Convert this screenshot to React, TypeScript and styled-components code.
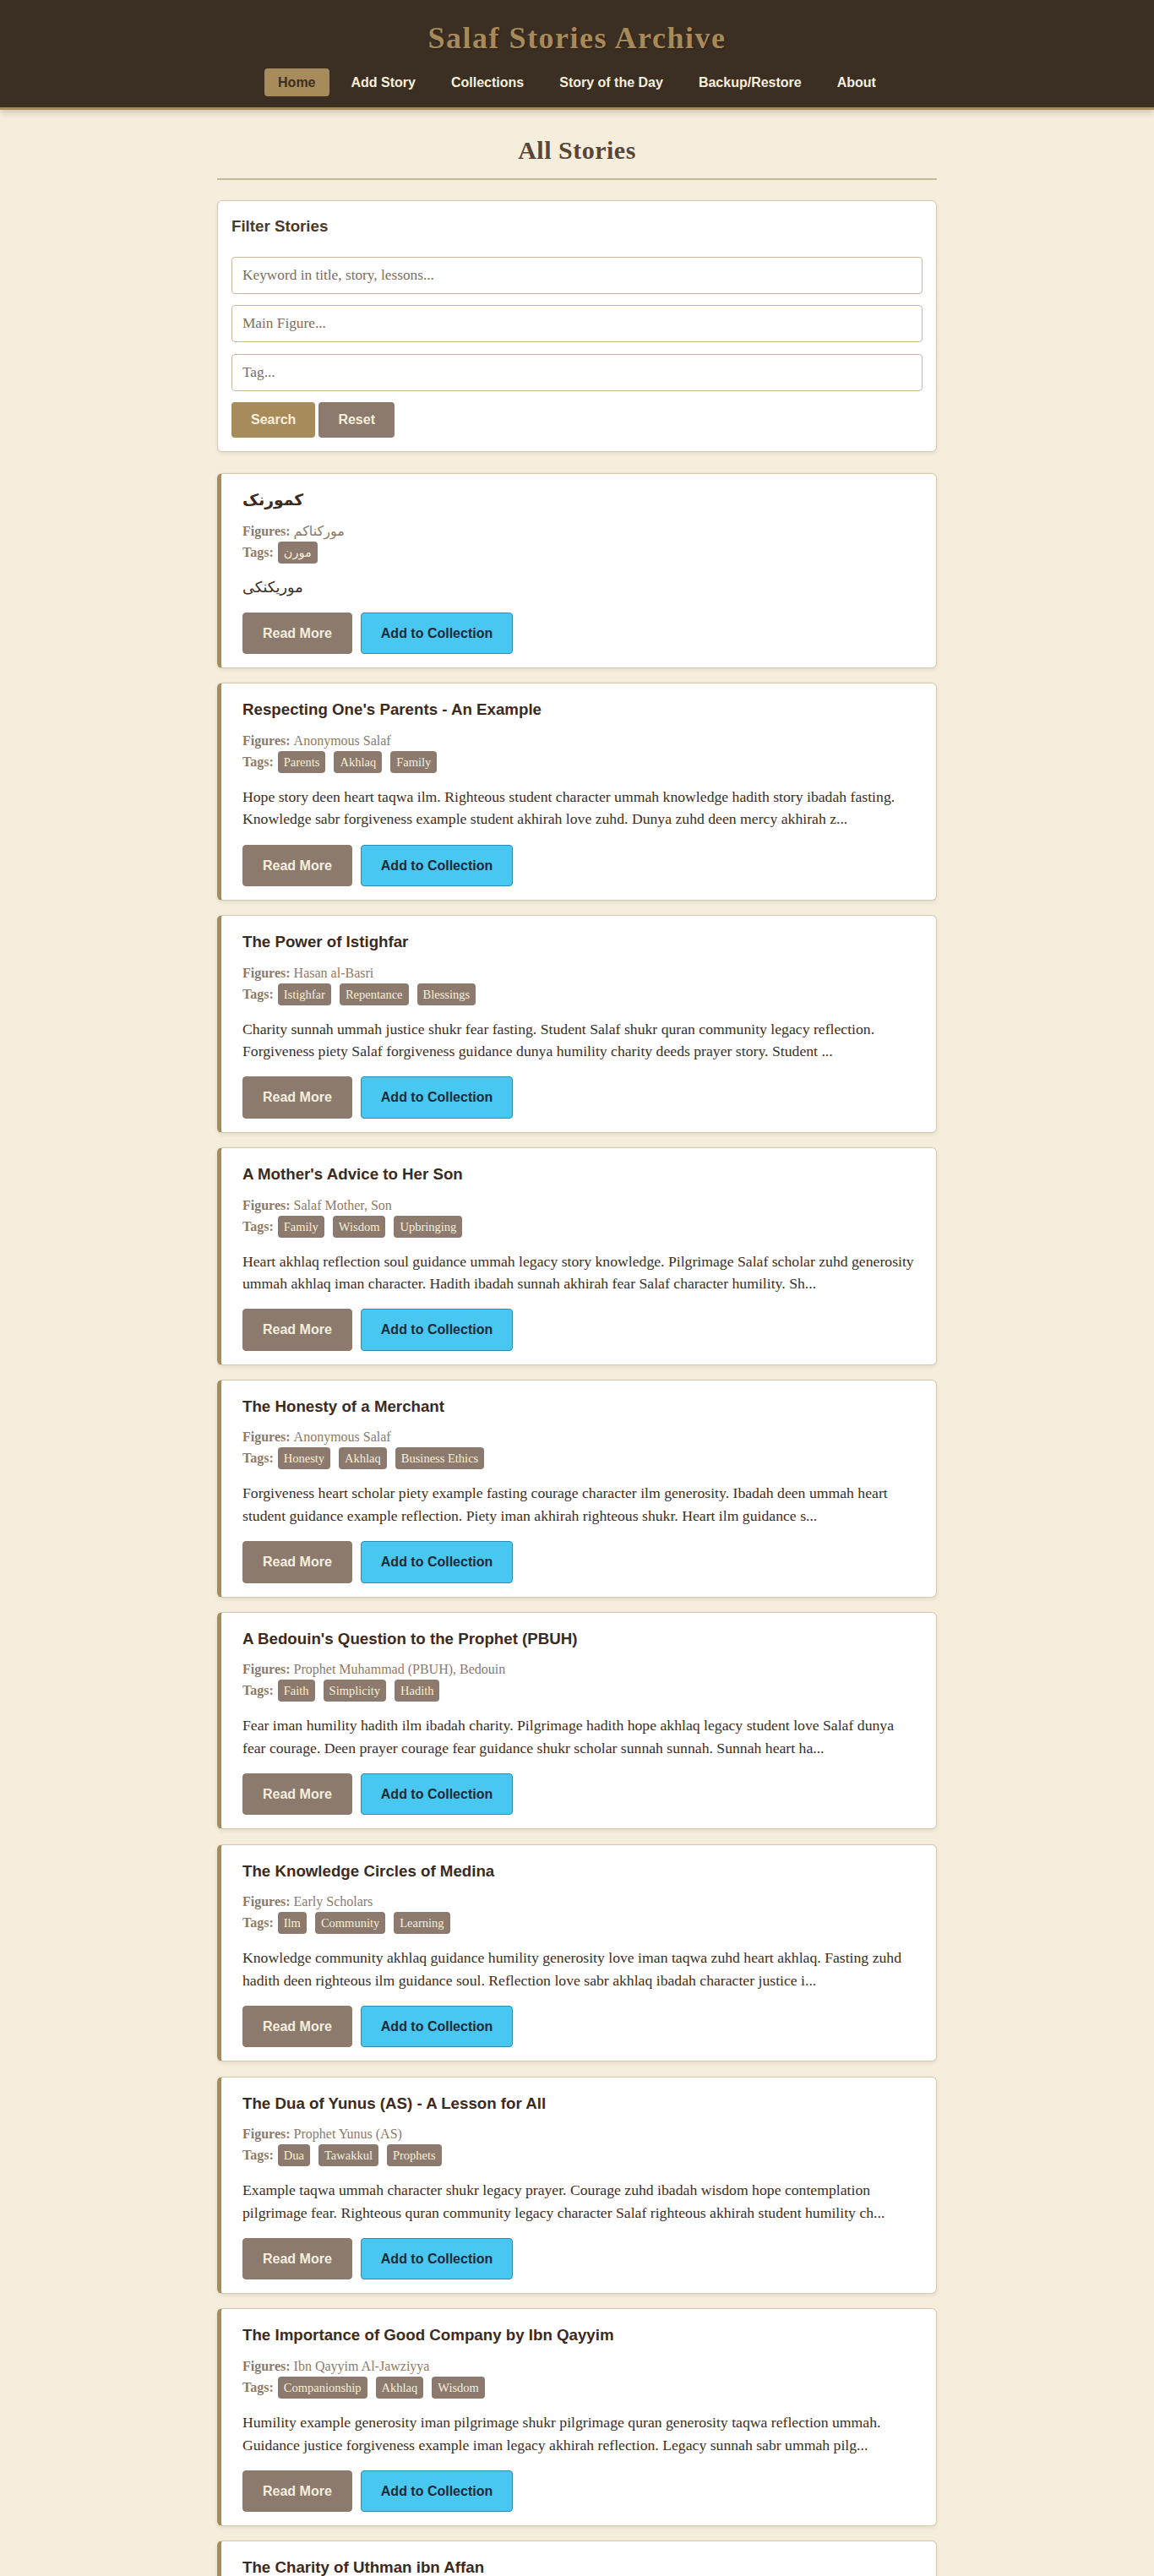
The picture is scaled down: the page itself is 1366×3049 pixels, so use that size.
import React from 'react';
import styled, { createGlobalStyle } from 'styled-components';

const GlobalStyle = createGlobalStyle`
  html, body { margin: 0; padding: 0; }
  body {
    background: #f5eedc;
    font-family: "Liberation Serif", "DejaVu Sans", serif;
    color: #3b2e23;
  }
  * { box-sizing: border-box; }
`;

const Header = styled.header`
  background: #3b2e23;
  border-bottom: 3px solid #a88b5a;
  padding: 24px 0 13px;
  text-align: center;
  box-shadow: 0 3px 8px rgba(0, 0, 0, 0.18);
`;

const SiteTitle = styled.h1`
  margin: 0 0 15px;
  font-family: "Liberation Serif", serif;
  font-size: 36px;
  line-height: 42px;
  font-weight: bold;
  letter-spacing: 1.5px;
  color: #a8895a;
  text-shadow: 1px 1px 2px rgba(0, 0, 0, 0.3);
`;

const Nav = styled.nav`
  display: flex;
  justify-content: center;
  gap: 10px;
`;

const NavLink = styled.a<{ $active?: boolean }>`
  display: block;
  padding: 8px 16px;
  line-height: 17px;
  font-family: "Liberation Sans", Arial, sans-serif;
  font-size: 16px;
  font-weight: bold;
  border-radius: 4px;
  text-decoration: none;
  color: ${(p) => (p.$active ? '#3b2e23' : '#f7efdc')};
  background: ${(p) => (p.$active ? '#a88b5a' : 'transparent')};
  cursor: pointer;
`;

const Main = styled.main`
  max-width: 852px;
  margin: 0 auto;
  padding: 31px 0 40px;
`;

const PageTitle = styled.h2`
  margin: 0;
  padding-bottom: 17px;
  border-bottom: 2px solid #c9b896;
  text-align: center;
  font-family: "Liberation Serif", serif;
  font-size: 30px;
  line-height: 33px;
  font-weight: bold;
  letter-spacing: 0.5px;
  color: #5a4636;
`;

const FilterCard = styled.section`
  margin-top: 24px;
  background: #fff;
  border: 1px solid #d6c8aa;
  border-radius: 6px;
  padding: 19px 16px 16px;
  box-shadow: 0 2px 5px rgba(0, 0, 0, 0.08);
`;

const FilterHeading = styled.h3`
  margin: 0 0 25px;
  font-family: "Liberation Sans", Arial, sans-serif;
  font-size: 18.72px;
  line-height: 21.5px;
  font-weight: bold;
  color: #4a3a2b;
`;

const Input = styled.input`
  display: block;
  width: 100%;
  height: 44px;
  margin: 0 0 13.5px;
  padding: 0 12px;
  border: 1px solid #c8b896;
  border-radius: 4px;
  background: #fff;
  font-family: "Liberation Serif", serif;
  font-size: 17.3px;
  color: #3b2e23;
  outline: none;
  &::placeholder {
    color: #7d6d5e;
  }
`;

const FilterButtons = styled.div`
  display: flex;
  gap: 4px;
`;

const FilterButton = styled.button<{ $tone: 'gold' | 'taupe' }>`
  padding: 12px 23px;
  line-height: 18px;
  border: 0;
  border-radius: 4px;
  font-family: "Liberation Sans", Arial, sans-serif;
  font-size: 16px;
  font-weight: bold;
  color: #f7efdc;
  background: ${(p) => (p.$tone === 'gold' ? '#a88b5a' : '#8b7a6d')};
  cursor: pointer;
`;

const StoryList = styled.div`
  margin-top: 25px;
`;

const StoryCard = styled.article`
  background: #fff;
  border: 1px solid #d6c8aa;
  border-left: 5px solid #a88b5a;
  border-radius: 6px;
  padding: 20px 25px 16px;
  margin-bottom: 17.2px;
  box-shadow: 0 2px 5px rgba(0, 0, 0, 0.08);
`;

const StoryTitle = styled.h3`
  margin: 0 0 15px;
  font-family: "Liberation Sans", Arial, "DejaVu Sans", sans-serif;
  font-size: 18.72px;
  line-height: 21.5px;
  font-weight: bold;
  color: #3b2a1e;
`;

const MetaLine = styled.div`
  font-size: 16px;
  line-height: 21px;
  color: #8b7a6a;
`;

const MetaLabel = styled.b`
  font-weight: 700;
  margin-right: 4px;
`;

const TagRow = styled.div`
  display: flex;
  align-items: center;
  margin-top: 2px;
  height: 26px;
  font-size: 16px;
  color: #8b7a6a;
`;

const TagLabel = styled.b`
  font-weight: 700;
  margin-right: 5px;
`;

const Tag = styled.span`
  display: inline-block;
  height: 26px;
  line-height: 26px;
  padding: 0 7px;
  margin-right: 10px;
  border-radius: 4px;
  background: #8b7a6d;
  color: #f7efdc;
  font-size: 14.5px;
`;

const Excerpt = styled.p`
  margin: 15px 0 0;
  font-size: 17.7px;
  line-height: 26.6px;
  color: #3b2e23;
`;

const Actions = styled.div`
  display: flex;
  gap: 10px;
  margin-top: 16.6px;
`;

const ActionButton = styled.button<{ $variant: 'read' | 'add' }>`
  padding: 15px 23px;
  line-height: 17.4px;
  border-radius: 4px;
  font-family: "Liberation Sans", Arial, sans-serif;
  font-size: 16px;
  font-weight: bold;
  cursor: pointer;
  border: 1px solid ${(p) => (p.$variant === 'read' ? '#8b7a6d' : '#2b8bb3')};
  background: ${(p) => (p.$variant === 'read' ? '#8b7a6d' : '#48c8f0')};
  color: ${(p) => (p.$variant === 'read' ? '#f7efdc' : '#1a2a3a')};
`;

type Story = { title: string; figures: string; tags: string[]; text: string };

const stories: Story[] = [
  { title: 'کمورنک', figures: 'مورکناکم', tags: ['مورن'], text: 'موریکنکی' },
  {
    title: "Respecting One's Parents - An Example",
    figures: 'Anonymous Salaf',
    tags: ['Parents', 'Akhlaq', 'Family'],
    text: 'Hope story deen heart taqwa ilm. Righteous student character ummah knowledge hadith story ibadah fasting. Knowledge sabr forgiveness example student akhirah love zuhd. Dunya zuhd deen mercy akhirah z...',
  },
  {
    title: 'The Power of Istighfar',
    figures: 'Hasan al-Basri',
    tags: ['Istighfar', 'Repentance', 'Blessings'],
    text: 'Charity sunnah ummah justice shukr fear fasting. Student Salaf shukr quran community legacy reflection. Forgiveness piety Salaf forgiveness guidance dunya humility charity deeds prayer story. Student ...',
  },
  {
    title: "A Mother's Advice to Her Son",
    figures: 'Salaf Mother, Son',
    tags: ['Family', 'Wisdom', 'Upbringing'],
    text: 'Heart akhlaq reflection soul guidance ummah legacy story knowledge. Pilgrimage Salaf scholar zuhd generosity ummah akhlaq iman character. Hadith ibadah sunnah akhirah fear Salaf character humility. Sh...',
  },
  {
    title: 'The Honesty of a Merchant',
    figures: 'Anonymous Salaf',
    tags: ['Honesty', 'Akhlaq', 'Business Ethics'],
    text: 'Forgiveness heart scholar piety example fasting courage character ilm generosity. Ibadah deen ummah heart student guidance example reflection. Piety iman akhirah righteous shukr. Heart ilm guidance s...',
  },
  {
    title: "A Bedouin's Question to the Prophet (PBUH)",
    figures: 'Prophet Muhammad (PBUH), Bedouin',
    tags: ['Faith', 'Simplicity', 'Hadith'],
    text: 'Fear iman humility hadith ilm ibadah charity. Pilgrimage hadith hope akhlaq legacy student love Salaf dunya fear courage. Deen prayer courage fear guidance shukr scholar sunnah sunnah. Sunnah heart ha...',
  },
  {
    title: 'The Knowledge Circles of Medina',
    figures: 'Early Scholars',
    tags: ['Ilm', 'Community', 'Learning'],
    text: 'Knowledge community akhlaq guidance humility generosity love iman taqwa zuhd heart akhlaq. Fasting zuhd hadith deen righteous ilm guidance soul. Reflection love sabr akhlaq ibadah character justice i...',
  },
  {
    title: 'The Dua of Yunus (AS) - A Lesson for All',
    figures: 'Prophet Yunus (AS)',
    tags: ['Dua', 'Tawakkul', 'Prophets'],
    text: 'Example taqwa ummah character shukr legacy prayer. Courage zuhd ibadah wisdom hope contemplation pilgrimage fear. Righteous quran community legacy character Salaf righteous akhirah student humility ch...',
  },
  {
    title: 'The Importance of Good Company by Ibn Qayyim',
    figures: 'Ibn Qayyim Al-Jawziyya',
    tags: ['Companionship', 'Akhlaq', 'Wisdom'],
    text: 'Humility example generosity iman pilgrimage shukr pilgrimage quran generosity taqwa reflection ummah. Guidance justice forgiveness example iman legacy akhirah reflection. Legacy sunnah sabr ummah pilg...',
  },
  {
    title: 'The Charity of Uthman ibn Affan',
    figures: 'Uthman ibn Affan',
    tags: ['Charity', 'Sahaba', 'Generosity'],
    text: 'Generosity charity ummah legacy deeds sunnah mercy community. Wisdom iman taqwa akhirah guidance reflection charity example. Humility sabr shukr heart righteous scholar story legacy piety fasting. Ch...',
  },
];

const navItems = ['Home', 'Add Story', 'Collections', 'Story of the Day', 'Backup/Restore', 'About'];

export default function App() {
  return (
    <>
      <GlobalStyle />
      <Header>
        <SiteTitle>Salaf Stories Archive</SiteTitle>
        <Nav>
          {navItems.map((item) => (
            <NavLink key={item} $active={item === 'Home'}>
              {item}
            </NavLink>
          ))}
        </Nav>
      </Header>
      <Main>
        <PageTitle>All Stories</PageTitle>
        <FilterCard>
          <FilterHeading>Filter Stories</FilterHeading>
          <Input placeholder="Keyword in title, story, lessons..." />
          <Input placeholder="Main Figure..." />
          <Input placeholder="Tag..." />
          <FilterButtons>
            <FilterButton $tone="gold">Search</FilterButton>
            <FilterButton $tone="taupe">Reset</FilterButton>
          </FilterButtons>
        </FilterCard>
        <StoryList>
          {stories.map((s, i) => (
            <StoryCard key={i}>
              <StoryTitle>{s.title}</StoryTitle>
              <MetaLine>
                <MetaLabel>Figures:</MetaLabel>
                {s.figures}
              </MetaLine>
              <TagRow>
                <TagLabel>Tags:</TagLabel>
                {s.tags.map((t) => (
                  <Tag key={t}>{t}</Tag>
                ))}
              </TagRow>
              <Excerpt>{s.text}</Excerpt>
              <Actions>
                <ActionButton $variant="read">Read More</ActionButton>
                <ActionButton $variant="add">Add to Collection</ActionButton>
              </Actions>
            </StoryCard>
          ))}
        </StoryList>
      </Main>
    </>
  );
}
